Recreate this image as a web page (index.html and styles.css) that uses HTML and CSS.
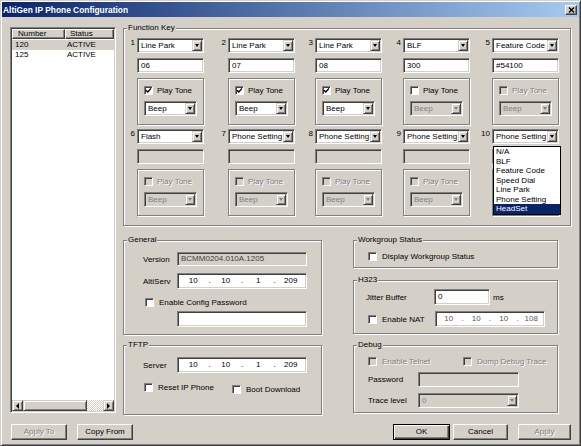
FILE: index.html
```html
<!DOCTYPE html>
<html lang="en">

<head>
    <meta charset="UTF-8">
    <title>AltiGen IP Phone Configuration</title>
    <link rel="stylesheet" href="styles.css">
</head>

<body>
    <div class="window">
        <div class="titlebar">
            <span class="title">AltiGen IP Phone Configuration</span>
            <span class="close">
                <svg width="7" height="6" viewBox="0 0 7 6"><path d="M1 0.5l5 5M6 0.5l-5 5" stroke="#000" stroke-width="1.4"/></svg>
            </span>
        </div>

        <div class="client">
            <div class="main">
                <div class="listview">
                    <div class="lv-head">
                        <div class="lv-h c1">Number</div>
                        <div class="lv-h c2">Status</div>
                    </div>
                    <div class="lv-body">
                        <div class="lv-row sel"><span class="c1">120</span><span class="c2">ACTIVE</span></div>
                        <div class="lv-row"><span class="c1">125</span><span class="c2">ACTIVE</span></div>
                    </div>
                    <div class="hscroll">
                        <div class="sb-btn"><span class="arr-l"></span></div>
                        <div class="sb-thumb"></div>
                        <div class="sb-track"></div>
                        <div class="sb-btn"><span class="arr-r"></span></div>
                    </div>
                </div>

                <div class="pane">
                    <div class="group fkeys">
                        <span class="group-title">Function Key</span>
                        <div class="fk-grid">
                            <div class="fk">
                                <span class="fk-num">1</span>
                                <div class="fk-ctl">
                                    <div class="combo"><span class="val">Line Park</span><span class="btn"><i class="arrow"></i></span></div>
                                    <div class="edit">06</div>
                                    <div class="sub">
                                        <label class="chk"><span class="cb"><svg width="7" height="7" viewBox="0 0 7 7"><path d="M1 3.2l1.8 1.8 3.2-3.6" stroke="#000" stroke-width="1.4" fill="none"/></svg></span>Play Tone</label>
                                        <div class="combo small"><span class="val">Beep</span><span class="btn"><i class="arrow"></i></span></div>
                                    </div>
                                </div>
                            </div>
                            <div class="fk">
                                <span class="fk-num">2</span>
                                <div class="fk-ctl">
                                    <div class="combo"><span class="val">Line Park</span><span class="btn"><i class="arrow"></i></span></div>
                                    <div class="edit">07</div>
                                    <div class="sub">
                                        <label class="chk"><span class="cb"><svg width="7" height="7" viewBox="0 0 7 7"><path d="M1 3.2l1.8 1.8 3.2-3.6" stroke="#000" stroke-width="1.4" fill="none"/></svg></span>Play Tone</label>
                                        <div class="combo small"><span class="val">Beep</span><span class="btn"><i class="arrow"></i></span></div>
                                    </div>
                                </div>
                            </div>
                            <div class="fk">
                                <span class="fk-num">3</span>
                                <div class="fk-ctl">
                                    <div class="combo"><span class="val">Line Park</span><span class="btn"><i class="arrow"></i></span></div>
                                    <div class="edit">08</div>
                                    <div class="sub">
                                        <label class="chk"><span class="cb"><svg width="7" height="7" viewBox="0 0 7 7"><path d="M1 3.2l1.8 1.8 3.2-3.6" stroke="#000" stroke-width="1.4" fill="none"/></svg></span>Play Tone</label>
                                        <div class="combo small"><span class="val">Beep</span><span class="btn"><i class="arrow"></i></span></div>
                                    </div>
                                </div>
                            </div>
                            <div class="fk">
                                <span class="fk-num">4</span>
                                <div class="fk-ctl">
                                    <div class="combo"><span class="val">BLF</span><span class="btn"><i class="arrow"></i></span></div>
                                    <div class="edit">300</div>
                                    <div class="sub">
                                        <label class="chk"><span class="cb"></span>Play Tone</label>
                                        <div class="combo small dis"><span class="val">Beep</span><span class="btn"><i class="arrow"></i></span></div>
                                    </div>
                                </div>
                            </div>
                            <div class="fk">
                                <span class="fk-num">5</span>
                                <div class="fk-ctl">
                                    <div class="combo"><span class="val">Feature Code</span><span class="btn"><i class="arrow"></i></span></div>
                                    <div class="edit">#54100</div>
                                    <div class="sub">
                                        <label class="chk dis"><span class="cb"></span>Play Tone</label>
                                        <div class="combo small dis"><span class="val">Beep</span><span class="btn"><i class="arrow"></i></span></div>
                                    </div>
                                </div>
                            </div>

                            <div class="fk">
                                <span class="fk-num">6</span>
                                <div class="fk-ctl">
                                    <div class="combo"><span class="val">Flash</span><span class="btn"><i class="arrow"></i></span></div>
                                    <div class="edit dis"></div>
                                    <div class="sub">
                                        <label class="chk dis"><span class="cb"></span>Play Tone</label>
                                        <div class="combo small dis"><span class="val">Beep</span><span class="btn"><i class="arrow"></i></span></div>
                                    </div>
                                </div>
                            </div>
                            <div class="fk">
                                <span class="fk-num">7</span>
                                <div class="fk-ctl">
                                    <div class="combo"><span class="val">Phone Setting</span><span class="btn"><i class="arrow"></i></span></div>
                                    <div class="edit dis"></div>
                                    <div class="sub">
                                        <label class="chk dis"><span class="cb"></span>Play Tone</label>
                                        <div class="combo small dis"><span class="val">Beep</span><span class="btn"><i class="arrow"></i></span></div>
                                    </div>
                                </div>
                            </div>
                            <div class="fk">
                                <span class="fk-num">8</span>
                                <div class="fk-ctl">
                                    <div class="combo"><span class="val">Phone Setting</span><span class="btn"><i class="arrow"></i></span></div>
                                    <div class="edit dis"></div>
                                    <div class="sub">
                                        <label class="chk dis"><span class="cb"></span>Play Tone</label>
                                        <div class="combo small dis"><span class="val">Beep</span><span class="btn"><i class="arrow"></i></span></div>
                                    </div>
                                </div>
                            </div>
                            <div class="fk">
                                <span class="fk-num">9</span>
                                <div class="fk-ctl">
                                    <div class="combo"><span class="val">Phone Setting</span><span class="btn"><i class="arrow"></i></span></div>
                                    <div class="edit dis"></div>
                                    <div class="sub">
                                        <label class="chk dis"><span class="cb"></span>Play Tone</label>
                                        <div class="combo small dis"><span class="val">Beep</span><span class="btn"><i class="arrow"></i></span></div>
                                    </div>
                                </div>
                            </div>
                            <div class="fk">
                                <span class="fk-num">10</span>
                                <div class="fk-ctl">
                                    <div class="combo"><span class="val">Phone Setting</span><span class="btn"><i class="arrow"></i></span></div>
                                    <div class="dropdown">
                                        <div>N/A</div>
                                        <div>BLF</div>
                                        <div>Feature Code</div>
                                        <div>Speed Dial</div>
                                        <div>Line Park</div>
                                        <div>Phone Setting</div>
                                        <div class="hl">HeadSet</div>
                                    </div>
                                    <!-- covered by the open list -->
                                    <div class="edit dis"></div>
                                    <div class="sub"></div>
                                </div>
                            </div>
                        </div>
                    </div>

                    <div class="lower">
                        <div class="col-left">
                            <div class="group general">
                                <span class="group-title">General</span>
                                <div class="frow">
                                    <span class="flabel">Version</span>
                                    <div class="edit ro wide">BCMM0204.010A.1205</div>
                                </div>
                                <div class="frow r2">
                                    <span class="flabel">AltiServ</span>
                                    <div class="edit ip wide"><span class="oct">10</span><span class="dot">.</span><span class="oct">10</span><span class="dot">.</span><span class="oct">1</span><span class="dot">.</span><span class="oct">209</span></div>
                                </div>
                                <div class="frow r3">
                                    <label class="chk big"><span class="cb"></span>Enable Config Password</label>
                                </div>
                                <div class="frow r4">
                                    <div class="edit wide pw"></div>
                                </div>
                            </div>

                            <div class="group tftp">
                                <span class="group-title">TFTP</span>
                                <div class="frow">
                                    <span class="flabel">Server</span>
                                    <div class="edit ip wide"><span class="oct">10</span><span class="dot">.</span><span class="oct">10</span><span class="dot">.</span><span class="oct">1</span><span class="dot">.</span><span class="oct">209</span></div>
                                </div>
                                <div class="frow cbrow">
                                    <label class="chk big reset"><span class="cb"></span>Reset IP Phone</label>
                                    <label class="chk big boot"><span class="cb"></span>Boot Download</label>
                                </div>
                            </div>
                        </div>

                        <div class="col-right">
                            <div class="group workgroup">
                                <span class="group-title">Workgroup Status</span>
                                <label class="chk big"><span class="cb"></span>Display Workgroup Status</label>
                            </div>

                            <div class="group h323">
                                <span class="group-title">H323</span>
                                <div class="frow">
                                    <span class="flabel jitter">Jitter Buffer</span>
                                    <div class="edit jitter-f">0</div>
                                    <span class="unit">ms</span>
                                </div>
                                <div class="frow nat-row">
                                    <label class="chk big nat"><span class="cb"></span>Enable NAT</label>
                                    <div class="edit ip nat-ip"><span class="oct">10</span><span class="dot">.</span><span class="oct">10</span><span class="dot">.</span><span class="oct">10</span><span class="dot">.</span><span class="oct">108</span></div>
                                </div>
                            </div>

                            <div class="group debug">
                                <span class="group-title">Debug</span>
                                <div class="frow">
                                    <label class="chk big dis telnet"><span class="cb"></span>Enable Telnet</label>
                                    <label class="chk big dis"><span class="cb"></span>Dump Debug Trace</label>
                                </div>
                                <div class="frow dbg-row">
                                    <span class="flabel dbg">Password</span>
                                    <div class="edit dis dbg-f"></div>
                                </div>
                                <div class="frow dbg-row">
                                    <span class="flabel dbg">Trace level</span>
                                    <div class="combo dis dbg-f"><span class="val">0</span><span class="btn"><i class="arrow"></i></span></div>
                                </div>
                            </div>
                        </div>
                    </div>
                </div>
            </div>

            <div class="footer">
                <span class="button dis w-apply-to">Apply To</span>
                <span class="button w-copy">Copy From</span>
                <span class="spacer"></span>
                <span class="button default w-ok">OK</span>
                <span class="button w-cancel">Cancel</span>
                <span class="button dis w-apply">Apply</span>
            </div>
        </div>
    </div>
</body>

</html>
```

FILE: styles.css
```css
* {
    box-sizing: border-box;
}

body {
    margin: 0;
    background-color: #d4d0c8;
    font-family: "Liberation Sans", Arial, sans-serif;
    font-size: 8px;
    color: #000;
}

.window {
    width: 581px;
    height: 446px;
    padding: 1px;
    background-color: #d4d0c8;
    border: 1px solid;
    border-color: #d4d0c8 #404040 #404040 #d4d0c8;
    box-shadow: inset 1px 1px #fff, inset -1px -1px #808080;
}

/* title bar */
.titlebar {
    height: 15px;
    display: flex;
    align-items: center;
    justify-content: space-between;
    padding: 0 2px 0 1px;
    background: linear-gradient(90deg, #0a246a, #a6caf0);
}

.title {
    color: #fff;
    font-weight: bold;
    font-size: 8.4px;
}

.close {
    width: 12px;
    height: 10px;
    display: flex;
    align-items: center;
    justify-content: center;
    background-color: #d4d0c8;
    border: 1px solid;
    border-color: #fff #404040 #404040 #fff;
    box-shadow: inset -1px -1px #808080;
}

/* shared 3d bits */
.edit,
.combo,
.cb,
.listview {
    background-color: #fff;
    border: 1px solid;
    border-color: #808080 #fff #fff #808080;
    box-shadow: inset 1px 1px #404040, inset -1px -1px #d4d0c8;
}

.group {
    position: relative;
    border: 1px solid #808080;
    box-shadow: inset 1px 1px #fff, 1px 1px #fff;
}

.group-title {
    position: absolute;
    top: -6px;
    left: 3px;
    padding: 0 1px;
    line-height: 10px;
    background-color: #d4d0c8;
    white-space: nowrap;
}

.client {
    padding: 10px 8px 0 8px;
}

.main {
    display: flex;
    gap: 7px;
    height: 388px;
}

/* list view */
.listview {
    width: 106px;
    height: 386px;
    padding: 1px;
    display: flex;
    flex-direction: column;
}

.lv-head {
    display: flex;
    height: 10px;
}

.lv-h {
    line-height: 8px;
    background-color: #d4d0c8;
    border: 1px solid;
    border-color: #fff #404040 #404040 #fff;
    box-shadow: inset -1px -1px #808080;
}

.lv-h.c1 {
    width: 53px;
    padding-left: 5px;
}

.lv-h.c2 {
    flex: 1;
    padding-left: 4px;
}

.lv-body {
    flex: 1;
    padding-top: 1px;
}

.lv-row {
    display: flex;
    height: 10px;
    line-height: 10px;
}

.lv-row.sel {
    background-color: #d4d0c8;
}

.lv-row .c1 {
    width: 53px;
    padding-left: 3px;
}

.lv-row .c2 {
    padding-left: 2px;
}

.hscroll {
    display: flex;
    height: 11px;
}

.sb-btn,
.sb-thumb {
    background-color: #d4d0c8;
    border: 1px solid;
    border-color: #d4d0c8 #404040 #404040 #d4d0c8;
    box-shadow: inset 1px 1px #fff, inset -1px -1px #808080;
}

.sb-btn {
    width: 11px;
    display: flex;
    align-items: center;
    justify-content: center;
}

.sb-thumb {
    width: 64px;
}

.sb-track {
    flex: 1;
    background: repeating-conic-gradient(#fff 0 25%, #d4d0c8 0 50%) 0 0 / 2px 2px;
}

.arr-l,
.arr-r {
    width: 0;
    height: 0;
    border-top: 3px solid transparent;
    border-bottom: 3px solid transparent;
}

.arr-l {
    border-right: 3px solid #000;
}

.arr-r {
    border-left: 3px solid #000;
}

/* right pane */
.pane {
    width: 448px;
    padding-top: 1px;
}

.fkeys {
    height: 198px;
    padding: 9px 0 0 6px;
}

.fk-grid {
    display: grid;
    grid-template-columns: 91px 87px 88px 89px 80px;
    row-gap: 4px;
}

.fk {
    display: flex;
}

.fk-num {
    width: 7px;
    flex-shrink: 0;
    display: flex;
    justify-content: flex-end;
    padding: 0 2px 0 0;
    line-height: 10px;
    white-space: nowrap;
}

.fk-ctl {
    position: relative;
    width: 67px;
    display: flex;
    flex-direction: column;
    gap: 5px;
}

/* combo box */
.combo {
    height: 15px;
    display: flex;
    padding: 1px;
}

.combo .val {
    flex: 1;
    padding-left: 2px;
    line-height: 11px;
    overflow: hidden;
    white-space: nowrap;
}

.combo .btn {
    width: 10px;
    flex-shrink: 0;
    display: flex;
    align-items: center;
    justify-content: center;
    background-color: #d4d0c8;
    border: 1px solid;
    border-color: #d4d0c8 #404040 #404040 #d4d0c8;
    box-shadow: inset 1px 1px #fff, inset -1px -1px #808080;
}

.arrow {
    width: 0;
    height: 0;
    border-left: 2.5px solid transparent;
    border-right: 2.5px solid transparent;
    border-top: 3px solid #000;
}

.combo.small {
    width: 53px;
}

.combo.dis,
.edit.dis,
.edit.ro {
    background-color: #d4d0c8;
}

.combo.dis .val {
    color: #808080;
}

.combo.dis .arrow {
    border-top-color: #808080;
}

.dropdown {
    position: absolute;
    top: 17px;
    left: 1px;
    z-index: 2;
    width: 68px;
    background-color: #fff;
    border: 1px solid #000;
}

.dropdown div {
    height: 9.5px;
    line-height: 9.5px;
    padding-left: 2px;
    white-space: nowrap;
}

.dropdown .hl {
    background-color: #0a246a;
    color: #fff;
}

/* edit */
.edit {
    height: 15px;
    padding: 0 3px;
    line-height: 13px;
    white-space: nowrap;
}

.edit.ro {
    color: #404040;
}

.ip {
    display: flex;
    padding: 0 1px;
}

.ip .oct {
    flex: 1;
    text-align: center;
}

.ip .dot {
    width: 4px;
    text-align: center;
}

/* check boxes */
.sub {
    height: 47px;
    display: flex;
    flex-direction: column;
    gap: 6px;
    padding: 7px 0 0 6px;
    border: 1px solid #808080;
    box-shadow: inset 1px 1px #fff, 1px 1px #fff;
}

.chk {
    display: flex;
    align-items: center;
    gap: 4px;
    height: 9px;
    line-height: 9px;
    white-space: nowrap;
}

.chk.big {
    gap: 5px;
}

.cb {
    width: 9px;
    height: 9px;
    flex-shrink: 0;
    display: flex;
    align-items: center;
    justify-content: center;
    box-shadow: inset 1px 1px #404040;
}

.chk.dis {
    color: #808080;
    text-shadow: 1px 1px #fff;
}

.chk.dis .cb {
    background-color: #d4d0c8;
}

/* lower groups */
.lower {
    display: flex;
    gap: 31px;
    height: 175px;
    margin-top: 14px;
}

.col-left {
    width: 199px;
    display: flex;
    flex-direction: column;
    gap: 10px;
}

.col-right {
    width: 205px;
    display: flex;
    flex-direction: column;
}

.frow {
    display: flex;
    align-items: center;
}

.flabel {
    width: 34px;
    flex-shrink: 0;
    white-space: nowrap;
}

.edit.wide {
    width: 130px;
    height: 16px;
    line-height: 14px;
}

.edit.ro.wide {
    height: 14px;
    line-height: 12px;
}

.general {
    height: 95px;
    padding: 11px 0 0 19px;
}

.general .r2 {
    margin-top: 7px;
}

.general .r3 {
    margin-top: 9px;
    padding-left: 2px;
}

.general .r4 {
    margin-top: 4px;
    padding-left: 34px;
}

.tftp {
    height: 70px;
    padding: 11px 0 0 19px;
}

.cbrow {
    margin-top: 10px;
    padding-left: 1px;
    align-items: flex-start;
}

.chk.reset {
    width: 88px;
}

.chk.boot {
    margin-top: 2px;
}

.workgroup {
    height: 28px;
    padding: 11px 0 0 14px;
}

.h323 {
    height: 54px;
    margin-top: 12px;
    padding: 8px 0 0 12px;
}

.flabel.jitter {
    width: 68px;
}

.jitter-f {
    width: 56px;
    height: 16px;
    line-height: 14px;
}

.unit {
    margin-left: 3px;
}

.nat-row {
    margin-top: 6px;
}

.chk.nat {
    width: 69px;
    padding-left: 2px;
}

.nat-ip {
    width: 110px;
    height: 16px;
    line-height: 14px;
    color: #555;
}

.debug {
    height: 68px;
    margin-top: 11px;
    padding: 11px 0 0 14px;
}

.chk.telnet {
    width: 95px;
}

.dbg-row {
    margin-top: 6px;
}

.flabel.dbg {
    width: 50px;
}

.dbg-f {
    width: 101px;
}

/* buttons */
.footer {
    display: flex;
    margin-top: 9px;
    padding-left: 1px;
}

.spacer {
    flex: 1;
}

.button {
    height: 16px;
    line-height: 14px;
    text-align: center;
    background-color: #d4d0c8;
    border: 1px solid;
    border-color: #fff #404040 #404040 #fff;
    box-shadow: inset -1px -1px #808080;
}

.button.default {
    border-color: #000;
    box-shadow: inset 1px 1px #fff, inset -1px -1px #404040, inset -2px -2px #808080;
}

.button.dis {
    color: #808080;
    text-shadow: 1px 1px #fff;
}

.w-apply-to {
    width: 56px;
    margin-right: 10px;
}

.w-copy {
    width: 56px;
}

.w-ok {
    width: 57px;
}

.w-cancel {
    width: 55px;
    margin-left: 3px;
}

.w-apply {
    width: 53px;
    margin-left: 10px;
}
```
